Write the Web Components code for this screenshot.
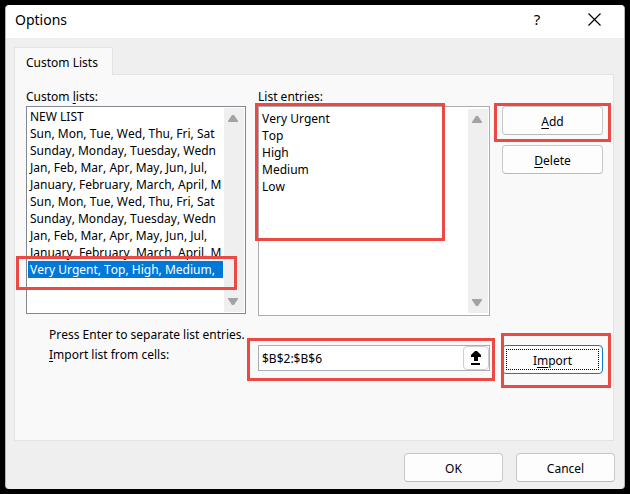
<!DOCTYPE html>
<html lang="en">
<head>
<meta charset="utf-8">
<title>Options</title>
<style>
  html, body { margin: 0; background: #000; }
  body { font: 12px/17px "Noto Sans", "Open Sans", sans-serif; font-kerning: none; color: #000; }
</style>
</head>
<body>
<options-dialog></options-dialog>

<template id="dialog-button-t">
  <style>
    :host { display: block; min-width: 0; }
    button {
      display: flex; align-items: center; justify-content: center; position: relative;
      width: 100%; height: 29px; padding: 1px 0 0; box-sizing: border-box;
      font: inherit; font-kerning: none; color: inherit; background: #fdfdfd;
      border: 1px solid #c8c8c8; border-bottom-color: #bababa; border-radius: 4px;
    }
    :host([default]) button { border-color: #0a78cf; }
    :host([default]) button::after {
      content: ""; position: absolute; inset: 3px; border: 1px dotted #000;
    }
  </style>
  <button type="button"><span><slot></slot></span></button>
</template>

<template id="mark-frame-t">
  <style>
    :host { display: block; position: relative; min-width: 0; }
    i {
      position: absolute; box-sizing: border-box; pointer-events: none;
      border: 3px solid #ea4a43; z-index: 1;
      inset: var(--frame, 0);
    }
  </style>
  <slot></slot><i></i>
</template>

<template id="scroll-strip-t">
  <style>
    :host {
      display: flex; flex-direction: column; justify-content: space-between; align-items: center;
      flex: none; width: 20px; padding: 7px 2px 7px 0; box-sizing: border-box; background: #efefef;
    }
    svg { display: block; width: 10px; height: 7px; fill: #a3a3a3; }
  </style>
  <svg viewBox="0 0 10 7"><path d="M4 0h2l4 6v1H0V6z"/></svg>
  <svg viewBox="0 0 10 7"><path d="M0 0h10v1L6 7H4L0 1z"/></svg>
</template>

<template id="custom-list-t">
  <style>
    :host {
      display: flex; height: 208px; box-sizing: border-box; padding: 1px;
      background: #fff; border: 1px solid #828790;
    }
    ul { flex: 1; min-width: 0; margin: 0; padding: 0; list-style: none; overflow: hidden; }
    li { height: 17px; padding-left: 2px; margin-right: 1px; white-space: nowrap; }
    li[aria-selected="true"] { background: #0078d7; color: #fff; }
  </style>
  <ul role="listbox" aria-label="Custom lists" tabindex="0"></ul>
  <scroll-strip></scroll-strip>
</template>

<template id="entry-box-t">
  <style>
    :host {
      display: flex; height: 210px; box-sizing: border-box; padding: 2px 1px;
      background: #fff; border: 1px solid #abadb3;
    }
    textarea {
      flex: 1; min-width: 0; padding: 1px 2px; margin: 0; border: 0; outline: 0; resize: none;
      overflow: hidden; background: none; font: inherit; font-kerning: none; color: inherit;
    }
  </style>
  <textarea aria-label="List entries"></textarea>
  <scroll-strip></scroll-strip>
</template>

<template id="range-input-t">
  <style>
    :host {
      display: flex; height: 26px; box-sizing: border-box;
      background: #fff; border: 1px solid #abadb3;
    }
    input {
      flex: 1; min-width: 0; padding: 0 3px; border: 0; outline: 0;
      background: none; font: inherit; font-kerning: none; color: inherit;
    }
    button {
      flex: none; display: grid; place-items: center; width: 26px; padding: 0;
      background: #fdfdfd; border: 1px solid #cfcfcf; border-radius: 4px;
    }
    svg { display: block; width: 10px; height: 14px; }
  </style>
  <input type="text" value="$B$2:$B$6" aria-label="Import list from cells">
  <button type="button" aria-label="Collapse dialog">
    <svg viewBox="0 0 10 14"><path d="M4 0h2l4 4v2H7v4H3V6H0V4zM0 12h9v2H0z"/></svg>
  </button>
</template>

<template id="options-dialog-t">
  <style>
    :host { display: flex; min-height: 100vh; box-sizing: border-box; padding: 5px; background: #000; }
    .window {
      flex: 1; min-width: 0; display: flex; flex-direction: column;
      background: #efefef; border: solid #b5b5b5; border-width: 0 1px; border-radius: 4px;
    }
    header {
      display: flex; align-items: center; height: 33px; padding: 0 16px 4px 9px; box-sizing: border-box;
      background: #fff; border-radius: 4px 4px 0 0;
    }
    h1 { flex: 1; margin: 0; font-size: 14px; line-height: 20px; font-weight: 400; }
    header button {
      display: grid; place-items: center; width: 28px; height: 24px; padding: 0; margin-left: 29px;
      border: 0; background: none; font: inherit; font-size: 15px; color: inherit;
    }
    header svg { display: block; width: 13px; height: 13px; fill: none; stroke: #000; stroke-width: 1.2; }
    main { flex: 1; display: flex; flex-direction: column; padding: 9px 10px 0 8px; }
    .tab {
      align-self: flex-start; box-sizing: border-box; height: 28px; padding: 2px 14px 0 11px;
      margin-bottom: -1px; background: #f9f9f9; border: 1px solid #e3e3e3; border-bottom: 0;
      font: inherit; font-kerning: none; color: inherit; display: block; position: relative;
    }
    section {
      flex: 1; padding: 13px 10px 12px 11px; background: #f9f9f9; border: 1px solid #e3e3e3;
    }
    .cols { display: grid; grid-template-columns: minmax(0, 220fr) minmax(0, 232fr) 101px; column-gap: 12px; align-items: start; }
    .cols + p { margin: 10px 0 2px 23px; }
    .label { display: block; margin-bottom: 1px; }
    .import .label { margin: 1px 0 0 23px; }
    .stack { display: grid; gap: 10px; padding-top: 18px; }
    u { text-underline-offset: 2px; text-decoration-thickness: 1px; text-decoration-skip-ink: none; }
    footer { display: grid; grid-template-columns: 99px 99px; justify-content: end; gap: 13px; padding: 12px 9px 7px; }
    .lists { --frame: 150px 9px 24px -10px; }
    .entries { --frame: -3px 45px 75px -3px; }
    .add { --frame: -3px -8px -7px; }
    .range { --frame: -7px -5px -10px -11px; }
    .go { --frame: -12px -8px -14px -1px; }
  </style>
  <div class="window" role="dialog" aria-labelledby="title">
    <header>
      <h1 id="title">Options</h1>
      <button type="button" aria-label="Help">?</button>
      <button type="button" aria-label="Close"><svg viewBox="0 0 13 13"><path d="M.5.5l12 12M12.5.5l-12 12"/></svg></button>
    </header>
    <main>
      <button class="tab" type="button" role="tab" aria-selected="true">Custom Lists</button>
      <section role="tabpanel" aria-label="Custom Lists">
        <div class="cols">
          <div>
            <span class="label">Custom <u>l</u>ists:</span>
            <mark-frame class="lists"><custom-list></custom-list></mark-frame>
          </div>
          <div>
            <span class="label">List <u>e</u>ntries:</span>
            <mark-frame class="entries"><entry-box></entry-box></mark-frame>
          </div>
          <div class="stack">
            <mark-frame class="add"><dialog-button><u>A</u>dd</dialog-button></mark-frame>
            <dialog-button><u>D</u>elete</dialog-button>
          </div>
        </div>
        <p>Press Enter to separate list entries.</p>
        <div class="cols import">
          <span class="label"><u>I</u>mport list from cells:</span>
          <mark-frame class="range"><range-input></range-input></mark-frame>
          <mark-frame class="go"><dialog-button default>I<u>m</u>port</dialog-button></mark-frame>
        </div>
      </section>
    </main>
    <footer>
      <dialog-button>OK</dialog-button>
      <dialog-button>Cancel</dialog-button>
    </footer>
  </div>
</template>

<script>
  const define = (name, setup) => customElements.define(name, class extends HTMLElement {
    constructor() {
      super();
      const root = this.attachShadow({ mode: "open" });
      root.append(document.getElementById(name + "-t").content.cloneNode(true));
      if (setup) setup(root);
    }
  });

  const days = "Sun, Mon, Tue, Wed, Thu, Fri, Sat";
  const longDays = "Sunday, Monday, Tuesday, Wedn";
  const months = "Jan, Feb, Mar, Apr, May, Jun, Jul,";
  const longMonths = "January, February, March, April, M";
  const priorities = "Very Urgent, Top, High, Medium,";
  const entries = ["Very Urgent", "Top", "High", "Medium", "Low"];

  define("dialog-button");
  define("mark-frame");
  define("scroll-strip");
  define("custom-list", root => {
    const rows = ["NEW LIST", days, longDays, months, longMonths, days, longDays, months, longMonths, priorities];
    rows.forEach((text, i) => {
      const li = document.createElement("li");
      li.setAttribute("role", "option");
      li.setAttribute("aria-selected", String(i === rows.length - 1));
      li.textContent = text;
      root.querySelector("ul").append(li);
    });
  });
  define("entry-box", root => { root.querySelector("textarea").value = entries.join("\n"); });
  define("range-input");
  define("options-dialog");
</script>
</body>
</html>
